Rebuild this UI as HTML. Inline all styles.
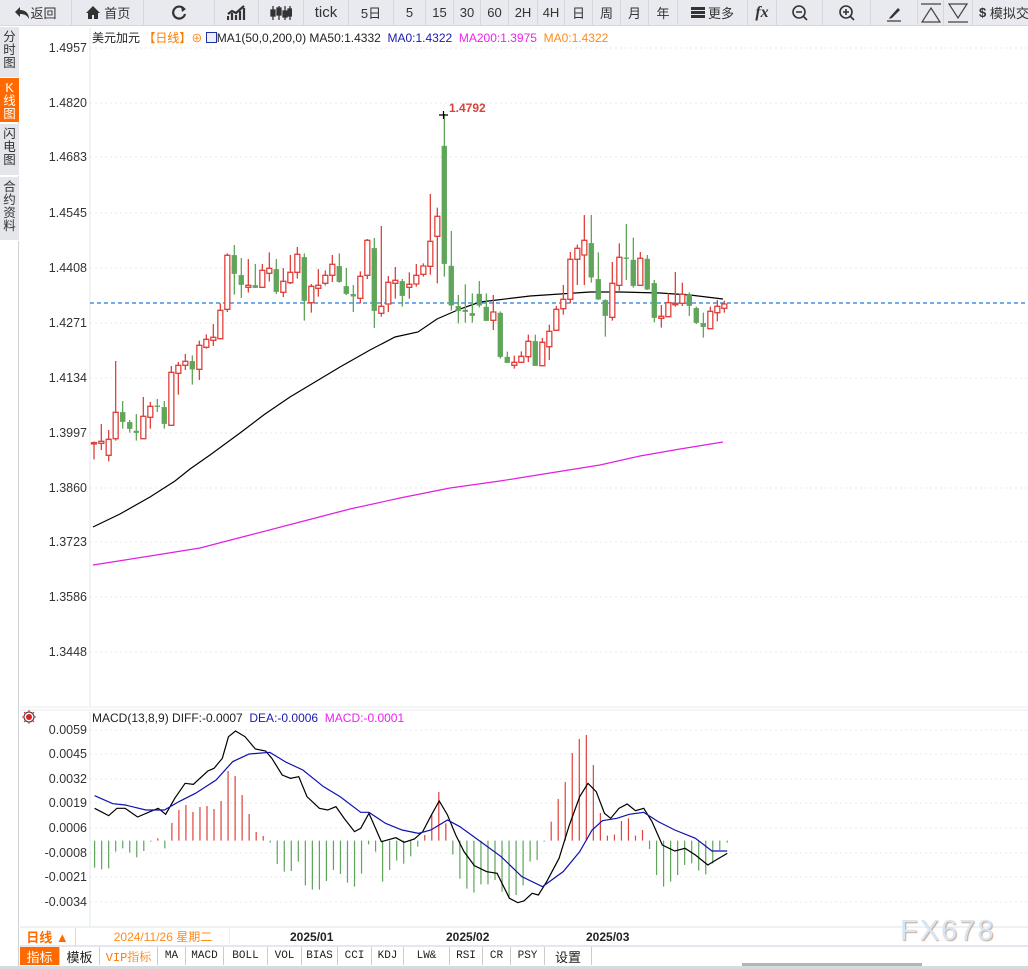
<!DOCTYPE html>
<html><head><meta charset="utf-8"><style>
*{margin:0;padding:0;box-sizing:border-box}
body{width:1028px;height:969px;background:#fff;position:relative;overflow:hidden;font-family:"Liberation Sans","Noto Sans CJK SC",sans-serif;font-size:12px;color:#222}
.tb{position:absolute;top:0;left:0;width:1028px;height:27px;background:#fff}
.b{position:absolute;top:0;height:26px;background:#e9eaef;border-right:1px solid #d6d7dd;border-bottom:1px solid #d6d7dd;display:flex;align-items:center;justify-content:center;font-size:13px;color:#333}
.side{position:absolute;left:0;top:27px;width:19px;height:940px;background:#fff;border-right:1px solid #d0d2d8}
.tab{position:absolute;left:0;width:19px;background:#e4e6ec;color:#333;font-size:12.5px;line-height:13px;text-align:center;padding-top:4px;border-bottom:1px solid #fff}
.lab{position:absolute;right:941px;font-size:12.5px;color:#333;text-align:right}
.t{position:absolute;white-space:nowrap}
.bt{position:absolute;top:947px;height:18px;border-right:1px solid #ccc;font-family:"Liberation Mono","Noto Serif CJK SC",monospace;font-size:11px;display:flex;align-items:center;justify-content:center;color:#222;background:#fff}
</style></head><body>
<div class="tb">
<div class="b" style="left:0;width:72px"><svg width="16" height="14" viewBox="0 0 16 14"><path d="M6 1L1 6L6 11V8C10 8 13 9 15 13C15 8 12 4 6 4Z" fill="#333"/></svg>返回</div>
<div class="b" style="left:72px;width:72px"><svg width="16" height="15" viewBox="0 0 16 15"><path d="M8 1L1 8H3V14H7V10H9V14H13V8H15Z" fill="#333"/></svg>&nbsp;首页</div>
<div class="b" style="left:144px;width:71px"><svg width="18" height="18" viewBox="0 0 18 18"><path d="M14 5A6 6 0 1 0 15 10" fill="none" stroke="#333" stroke-width="2.2"/><path d="M11 2L16 5L12 8Z" fill="#333"/></svg></div>
<div class="b" style="left:215px;width:44px"><svg width="20" height="16" viewBox="0 0 20 16"><path d="M1 15V11M5 15V8M9 15V10M13 15V6M17 15V3M1 9L5 6L9 8L17 1" stroke="#333" stroke-width="2.2" fill="none"/></svg></div>
<div class="b" style="left:259px;width:45px"><svg width="22" height="16" viewBox="0 0 22 16"><g fill="#333" stroke="#333" stroke-width="1.3"><path d="M3 1V15M9 1V15M15 1V15M20 1V15"/><rect x="1" y="5" width="4" height="6"/><rect x="7" y="3" width="4" height="7"/><rect x="13" y="6" width="4" height="6"/><rect x="18" y="4" width="4" height="7"/></g></svg></div>
<div class="b" style="left:304px;width:45px;font-size:15px">tick</div>
<div class="b" style="left:349px;width:45px">5日</div>
<div class="b" style="left:394px;width:32px">5</div>
<div class="b" style="left:426px;width:28px">15</div>
<div class="b" style="left:454px;width:27px">30</div>
<div class="b" style="left:481px;width:28px">60</div>
<div class="b" style="left:509px;width:29px">2H</div>
<div class="b" style="left:538px;width:27px">4H</div>
<div class="b" style="left:565px;width:28px">日</div>
<div class="b" style="left:593px;width:28px">周</div>
<div class="b" style="left:621px;width:28px">月</div>
<div class="b" style="left:649px;width:29px">年</div>
<div class="b" style="left:678px;width:70px"><span style="display:inline-block;width:14px;height:11px;border-top:3px solid #333;border-bottom:3px solid #333;position:relative;margin-right:3px"><span style="position:absolute;left:0;top:1px;width:14px;height:3px;background:#333"></span></span>更多</div>
<div class="b" style="left:748px;width:29px;font-family:'Liberation Serif',serif;font-style:italic;font-weight:bold;font-size:16px">fx</div>
<div class="b" style="left:777px;width:46px"><svg width="18" height="18" viewBox="0 0 18 18"><circle cx="8" cy="8" r="6" fill="none" stroke="#333" stroke-width="1.6"/><path d="M5 8H11M12.5 12.5L16 16" stroke="#333" stroke-width="1.6"/></svg></div>
<div class="b" style="left:823px;width:48px"><svg width="18" height="18" viewBox="0 0 18 18"><circle cx="8" cy="8" r="6" fill="none" stroke="#333" stroke-width="1.6"/><path d="M5 8H11M8 5V11M12.5 12.5L16 16" stroke="#333" stroke-width="1.6"/></svg></div>
<div class="b" style="left:871px;width:47px"><svg width="18" height="18" viewBox="0 0 18 18"><path d="M5 13L13 4L15 6L7 14L4 15Z" fill="#333"/><path d="M2 17H16" stroke="#333" stroke-width="1.2"/></svg></div>
<div class="b" style="left:918px;width:26px"><svg width="22" height="20" viewBox="0 0 22 20"><path d="M1 1H21M2 19H20L11 5Z" fill="none" stroke="#444" stroke-width="1.2"/></svg></div>
<div class="b" style="left:944px;width:29px"><svg width="22" height="20" viewBox="0 0 22 20"><path d="M1 19H21M2 1H20L11 15Z" fill="none" stroke="#444" stroke-width="1.2"/></svg></div>
<div class="b" style="left:973px;width:60px;justify-content:flex-start;padding-left:6px"><b>$</b>&nbsp;模拟交</div>
</div>
<div class="side">
<div class="tab" style="top:0;height:51px">分<br>时<br>图</div>
<div class="tab" style="top:51px;height:45px;background:#ff6a00;color:#fff">K<br>线<br>图</div>
<div class="tab" style="top:97px;height:52px">闪<br>电<br>图</div>
<div class="tab" style="top:150px;height:64px">合<br>约<br>资<br>料</div>
</div>
<svg style="position:absolute;left:0;top:0" width="1028" height="969">
<g stroke="#e4e8ee" stroke-dasharray="2,3">
<path d="M90 48H1028M90 103H1028M90 157H1028M90 213H1028M90 268H1028M90 323H1028M90 378H1028M90 433H1028M90 488H1028M90 542H1028M90 597H1028M90 652H1028"/>
<path d="M90 730H1028M90 754H1028M90 779H1028M90 803H1028M90 828H1028M90 853H1028M90 877H1028M90 902H1028"/>
</g>
<path d="M90 28V706M90 712V927" stroke="#dfe8ee" stroke-width="1"/>
<path d="M20 707H1028M20 710H1028" stroke="#e6eaee"/>
<path d="M20 927H1028" stroke="#dfe6ea"/>
<path d="M20 946H1028" stroke="#c9d2dc"/>
<path d="M90 303H1028" stroke="#1e7be0" stroke-dasharray="4,3" stroke-width="1.2"/>
<polyline fill="none" stroke="#000" stroke-width="1.2" points="93,527 120,514 150,497 175,481 190,469 210,455 240,433 265,414 290,397 315,382 340,367 370,350 395,337 418,332 437,319 460,309 480,302 497,300 530,296 560,294 590,292 620,292 660,293 690,295 723,299"/>
<polyline fill="none" stroke="#e020e0" stroke-width="1.2" points="93,565 150,556 200,548 250,535 300,522 350,509 400,498 450,488 500,481 550,473 600,465 640,456 680,449 723,442"/>
<g transform="translate(88,100) scale(0.33333)">
<g stroke="#e0413c" fill="#fff" stroke-width="1.3" vector-effect="non-scaling-stroke">
<path vector-effect="non-scaling-stroke" d="M18 1024V1078M40 972V1050M62 990V1084M83 783V1022M166 891V1016M187 906V986M250 798V976M271 786V884M292 762V810M334 722V840M355 703V746M376 672V738M397 610V718M418 460V636M481 477V578M523 492V562M544 457V545M586 504V591M607 465V552M628 441V536M670 552V638M691 507V590M712 511V556M733 465V546M817 514V610M838 417V537M880 378V650M901 528V636M922 501V596M964 517V596M985 492V560"/>
<rect vector-effect="non-scaling-stroke" x="10.5" y="1028" width="15" height="4"/><rect vector-effect="non-scaling-stroke" x="32.5" y="1024" width="15" height="6"/><rect vector-effect="non-scaling-stroke" x="54.5" y="1018" width="15" height="48"/><rect vector-effect="non-scaling-stroke" x="75.5" y="937" width="15" height="79"/><rect vector-effect="non-scaling-stroke" x="158.5" y="949" width="15" height="67"/><rect vector-effect="non-scaling-stroke" x="179.5" y="919" width="15" height="33"/><rect vector-effect="non-scaling-stroke" x="242.5" y="817" width="15" height="159"/><rect vector-effect="non-scaling-stroke" x="263.5" y="796" width="15" height="24"/><rect vector-effect="non-scaling-stroke" x="284.5" y="784" width="15" height="12"/><rect vector-effect="non-scaling-stroke" x="326.5" y="736" width="15" height="72"/><rect vector-effect="non-scaling-stroke" x="347.5" y="718" width="15" height="24"/><rect vector-effect="non-scaling-stroke" x="368.5" y="712" width="15" height="9"/><rect vector-effect="non-scaling-stroke" x="389.5" y="631" width="15" height="85"/><rect vector-effect="non-scaling-stroke" x="410.5" y="466" width="15" height="162"/><rect vector-effect="non-scaling-stroke" x="473.5" y="556" width="15" height="6"/><rect vector-effect="non-scaling-stroke" x="515.5" y="511" width="15" height="51"/><rect vector-effect="non-scaling-stroke" x="536.5" y="505" width="15" height="15"/><rect vector-effect="non-scaling-stroke" x="578.5" y="544" width="15" height="33"/><rect vector-effect="non-scaling-stroke" x="599.5" y="517" width="15" height="31"/><rect vector-effect="non-scaling-stroke" x="620.5" y="463" width="15" height="54"/><rect vector-effect="non-scaling-stroke" x="662.5" y="559" width="15" height="49"/><rect vector-effect="non-scaling-stroke" x="683.5" y="556" width="15" height="9"/><rect vector-effect="non-scaling-stroke" x="704.5" y="526" width="15" height="24"/><rect vector-effect="non-scaling-stroke" x="725.5" y="493" width="15" height="33"/><rect vector-effect="non-scaling-stroke" x="809.5" y="529" width="15" height="66"/><rect vector-effect="non-scaling-stroke" x="830.5" y="421" width="15" height="105"/><rect vector-effect="non-scaling-stroke" x="872.5" y="619" width="15" height="21"/><rect vector-effect="non-scaling-stroke" x="893.5" y="547" width="15" height="65"/><rect vector-effect="non-scaling-stroke" x="914.5" y="541" width="15" height="9"/><rect vector-effect="non-scaling-stroke" x="956.5" y="553" width="15" height="9"/><rect vector-effect="non-scaling-stroke" x="977.5" y="526" width="15" height="26"/>
</g>
<g stroke="#5fa55a" fill="#5fa55a">
<path vector-effect="non-scaling-stroke" stroke-width="1.3" d="M104 903V986M125 960V998M145 942V1022M208 897V936M229 903V986M313 766V854M439 435V584M460 474V594M502 492V564M565 477V582M649 460V662M754 460V548M775 504V585M796 555V636M859 414V684M943 537V620"/>
<rect x="96.5" y="937" width="15" height="28"/><rect x="117.5" y="967" width="15" height="19"/><rect x="137.5" y="993" width="15" height="5"/><rect x="200.5" y="917" width="15" height="3"/><rect x="221.5" y="922" width="15" height="49"/><rect x="305.5" y="784" width="15" height="24"/><rect x="431.5" y="466" width="15" height="55"/><rect x="452.5" y="526" width="15" height="28"/><rect x="494.5" y="556" width="15" height="7"/><rect x="557.5" y="508" width="15" height="67"/><rect x="641.5" y="472" width="15" height="130"/><rect x="746.5" y="499" width="15" height="46"/><rect x="767.5" y="559" width="15" height="22"/><rect x="788.5" y="583" width="15" height="6"/><rect x="851.5" y="445" width="15" height="187"/><rect x="935.5" y="544" width="15" height="43"/>
</g>
</g>
<g transform="translate(410,100) scale(0.33333)">
<g stroke="#e0413c" fill="#fff">
<path vector-effect="non-scaling-stroke" stroke-width="1.3" d="M40 490V530M61 282V524M82 323V550M250 585V690M313 767V806M334 754V787M355 704V786M397 714V797M418 674V780M439 618V692M460 555V644M481 456V610M502 434V555M523 345V555M607 486V662M628 430V572M691 456V556M754 615V683M775 580V650M796 516V620M817 548V618M901 620V686M922 600V664M943 602V638"/>
<g stroke-width="1.3">
<rect vector-effect="non-scaling-stroke" x="32.5" y="498" width="15" height="25"/><rect vector-effect="non-scaling-stroke" x="53.5" y="424" width="15" height="75"/><rect vector-effect="non-scaling-stroke" x="74.5" y="349" width="15" height="60"/><rect vector-effect="non-scaling-stroke" x="242.5" y="636" width="15" height="25"/><rect vector-effect="non-scaling-stroke" x="305.5" y="787" width="15" height="9"/><rect vector-effect="non-scaling-stroke" x="326.5" y="769" width="15" height="18"/><rect vector-effect="non-scaling-stroke" x="347.5" y="724" width="15" height="46"/><rect vector-effect="non-scaling-stroke" x="389.5" y="727" width="15" height="70"/><rect vector-effect="non-scaling-stroke" x="410.5" y="694" width="15" height="46"/><rect vector-effect="non-scaling-stroke" x="431.5" y="628" width="15" height="63"/><rect vector-effect="non-scaling-stroke" x="452.5" y="598" width="15" height="28"/><rect vector-effect="non-scaling-stroke" x="473.5" y="478" width="15" height="120"/><rect vector-effect="non-scaling-stroke" x="494.5" y="445" width="15" height="33"/><rect vector-effect="non-scaling-stroke" x="515.5" y="421" width="15" height="44"/><rect vector-effect="non-scaling-stroke" x="599.5" y="550" width="15" height="102"/><rect vector-effect="non-scaling-stroke" x="620.5" y="472" width="15" height="84"/><rect vector-effect="non-scaling-stroke" x="683.5" y="475" width="15" height="81"/><rect vector-effect="non-scaling-stroke" x="746.5" y="649" width="15" height="6"/><rect vector-effect="non-scaling-stroke" x="767.5" y="608" width="15" height="42"/><rect vector-effect="non-scaling-stroke" x="788.5" y="610" width="15" height="4"/><rect vector-effect="non-scaling-stroke" x="809.5" y="583" width="15" height="27"/><rect vector-effect="non-scaling-stroke" x="893.5" y="634" width="15" height="52"/><rect vector-effect="non-scaling-stroke" x="914.5" y="619" width="15" height="19"/><rect vector-effect="non-scaling-stroke" x="935.5" y="612" width="15" height="13"/>
</g></g>
<g stroke="#5fa55a" fill="#5fa55a">
<path vector-effect="non-scaling-stroke" stroke-width="1.3" d="M103 42V530M124 393V632M145 585V670M166 553V668M187 580V668M208 543V622M229 580V662M271 634V776M292 755V788M376 704V797M544 345V548M565 457V600M586 598V710M649 372V540M670 413V563M712 465V570M733 540V667M838 577V648M859 620V672M880 638V713"/>
<rect x="95.5" y="138" width="15" height="353"/><rect x="116.5" y="498" width="15" height="118"/><rect x="137.5" y="619" width="15" height="13"/><rect x="158.5" y="630" width="15" height="5"/><rect x="179.5" y="640" width="15" height="7"/><rect x="200.5" y="582" width="15" height="34"/><rect x="221.5" y="621" width="15" height="41"/><rect x="263.5" y="639" width="15" height="131"/><rect x="284.5" y="771" width="15" height="17"/><rect x="368.5" y="724" width="15" height="73"/><rect x="536.5" y="430" width="15" height="102"/><rect x="557.5" y="538" width="15" height="60"/><rect x="578.5" y="601" width="15" height="46"/><rect x="641.5" y="473" width="15" height="3"/><rect x="662.5" y="480" width="15" height="77"/><rect x="704.5" y="477" width="15" height="91"/><rect x="725.5" y="550" width="15" height="103"/><rect x="830.5" y="583" width="15" height="34"/><rect x="851.5" y="625" width="15" height="43"/><rect x="872.5" y="670" width="15" height="10"/>
</g>
</g>
<path d="M439 115H448M443.5 111V119" stroke="#000" stroke-width="1.2"/>
<text x="449" y="112" font-family="Liberation Sans" font-size="12" font-weight="bold" fill="#d9423a">1.4792</text>
<g transform="translate(88,725) scale(0.4132,0.33333)">
<path vector-effect="non-scaling-stroke" stroke="#e0413c" stroke-width="1.2" fill="none" d="M169 347V340M203 347V294M220 347V255M237 347V240M254 347V261M271 347V246M288 347V243M305 347V252M322 347V228M339 347V138M356 347V153M373 347V210M390 347V267M407 347V321M424 347V333M815 347V330M832 347V270M849 347V201M866 347V295M1121 347V290M1138 347V222M1155 347V171M1172 347V84M1189 347V42M1206 347V30M1223 347V120M1240 347V264M1257 347V332M1274 347V329M1291 347V288M1308 347V280M1325 347V332M1342 347V315"/>
<path vector-effect="non-scaling-stroke" stroke="#5fa55a" stroke-width="1.2" fill="none" d="M16 347V428M33 347V433M50 347V430M67 347V380M84 347V370M101 347V383M118 347V397M135 347V378M152 347V350M186 347V370M441 347V353M458 347V417M475 347V440M492 347V438M509 347V410M526 347V481M543 347V494M560 347V494M577 347V468M594 347V435M611 347V447M628 347V473M645 347V485M662 347V446M679 347V358M696 347V380M713 347V470M730 347V435M747 347V407M764 347V416M781 347V394M798 347V365M883 347V389M900 347V461M917 347V491M934 347V503M951 347V478M968 347V478M985 347V465M1002 347V500M1019 347V520M1036 347V510M1053 347V481M1070 347V410M1087 347V405M1104 347V350M1359 347V372M1376 347V450M1393 347V485M1410 347V470M1427 347V450M1444 347V420M1461 347V415M1478 347V437M1495 347V448M1512 347V415M1529 347V375M1547 347V353"/>
<polyline vector-effect="non-scaling-stroke" fill="none" stroke="#000" stroke-width="1.2" points="16,250 50,272 70,250 90,250 120,276 150,260 170,250 188,268 210,220 235,175 255,178 290,138 305,130 325,100 340,35 357,18 380,35 405,72 430,78 445,100 470,150 490,160 510,155 530,215 560,250 580,255 600,245 620,280 645,320 660,310 680,265 710,350 745,338 765,352 790,342 810,320 832,268 850,228 870,270 890,330 910,380 935,422 965,440 990,445 1020,520 1040,533 1055,528 1075,505 1090,510 1110,470 1140,400 1165,300 1190,215 1210,175 1230,200 1250,265 1265,280 1285,250 1305,237 1325,257 1345,250 1365,290 1390,360 1420,378 1445,370 1470,390 1500,420 1520,405 1547,385"/>
<polyline vector-effect="non-scaling-stroke" fill="none" stroke="#1010b0" stroke-width="1.2" points="16,212 60,236 90,240 140,255 185,255 220,230 260,205 310,165 350,110 390,87 440,82 480,112 520,135 570,185 610,215 660,262 680,262 720,295 760,315 800,325 830,315 870,285 900,305 950,350 1000,395 1050,455 1100,485 1150,440 1190,380 1220,315 1245,287 1280,280 1310,268 1345,262 1380,290 1420,315 1470,340 1510,378 1547,378"/>
</g>
<circle cx="29" cy="717" r="3" fill="#e02020"/><circle cx="29" cy="717" r="5" fill="none" stroke="#333" stroke-width="1"/>
<path d="M29 710V712M29 722V724M22 717H24M34 717H36M24 712L25.5 713.5M34 712L32.5 713.5M24 722L25.5 720.5M34 722L32.5 720.5" stroke="#e02020" stroke-width="1"/>
<rect x="742" y="963" width="180" height="6" fill="#b4b4bc"/>
</svg>
<div class="lab" style="top:41px">1.4957</div><div class="lab" style="top:96px">1.4820</div><div class="lab" style="top:150px">1.4683</div><div class="lab" style="top:206px">1.4545</div><div class="lab" style="top:261px">1.4408</div><div class="lab" style="top:316px">1.4271</div><div class="lab" style="top:371px">1.4134</div><div class="lab" style="top:426px">1.3997</div><div class="lab" style="top:481px">1.3860</div><div class="lab" style="top:535px">1.3723</div><div class="lab" style="top:590px">1.3586</div><div class="lab" style="top:645px">1.3448</div>
<div class="lab" style="top:723px">0.0059</div><div class="lab" style="top:747px">0.0045</div><div class="lab" style="top:772px">0.0032</div><div class="lab" style="top:796px">0.0019</div><div class="lab" style="top:821px">0.0006</div><div class="lab" style="top:846px">-0.0008</div><div class="lab" style="top:870px">-0.0021</div><div class="lab" style="top:895px">-0.0034</div>
<div class="t" style="left:92px;top:29px">美元加元 <span style="color:#ff7a00">【日线】</span><span style="color:#ff7a00;font-size:11px">⊕</span> <span style="display:inline-block;width:11px;height:11px;border:1px solid #2030a0;background:#eef;vertical-align:-1px"></span>MA1(50,0,200,0) MA50:1.4332 &nbsp;<span style="color:#1a1ab0">MA0:1.4322</span> &nbsp;<span style="color:#f020f0">MA200:1.3975</span> &nbsp;<span style="color:#ff8a1a">MA0:1.4322</span></div>
<div class="t" style="left:92px;top:711px">MACD(13,8,9) DIFF:-0.0007 &nbsp;<span style="color:#1a1ab0">DEA:-0.0006</span> &nbsp;<span style="color:#f020f0">MACD:-0.0001</span></div>
<div class="t" style="left:20px;top:928px;width:56px;height:18px;border-right:1px solid #ddd;color:#ff6a00;font-weight:bold;font-size:13px;text-align:center;line-height:20px">日线 ▲</div>
<div class="t" style="left:97px;top:928px;width:133px;height:18px;border-right:1px solid #eee;color:#ff8a1a;text-align:center;line-height:18px">2024/11/26 星期二</div>
<div class="t" style="left:290px;top:930px;font-weight:bold">2025/01</div>
<div class="t" style="left:446px;top:930px;font-weight:bold">2025/02</div>
<div class="t" style="left:586px;top:930px;font-weight:bold">2025/03</div>
<div class="t" style="left:900px;top:915px;font-size:29px;letter-spacing:2px;color:#d6e6f6;text-shadow:1px 1px 1px #c9a890">FX678</div>
<div class="bt" style="left:20px;width:40px;background:#ff6a00;color:#fff;font-family:'Liberation Sans','Noto Sans CJK SC',sans-serif;font-size:13px">指标</div>
<div class="bt" style="left:60px;width:40px;font-family:'Liberation Sans','Noto Sans CJK SC',sans-serif;font-size:13px">模板</div>
<div class="bt" style="left:100px;width:58px;color:#ff7a00;font-size:12px">VIP指标</div>
<div class="bt" style="left:158px;width:28px">MA</div>
<div class="bt" style="left:186px;width:38px">MACD</div>
<div class="bt" style="left:224px;width:44px">BOLL</div>
<div class="bt" style="left:268px;width:34px">VOL</div>
<div class="bt" style="left:302px;width:36px">BIAS</div>
<div class="bt" style="left:338px;width:34px">CCI</div>
<div class="bt" style="left:372px;width:32px">KDJ</div>
<div class="bt" style="left:404px;width:46px">LW&amp;</div>
<div class="bt" style="left:450px;width:33px">RSI</div>
<div class="bt" style="left:483px;width:28px">CR</div>
<div class="bt" style="left:511px;width:34px">PSY</div>
<div class="bt" style="left:545px;width:47px;font-family:'Liberation Sans','Noto Sans CJK SC',sans-serif;font-size:13px">设置</div>
<div style="position:absolute;left:0;top:966px;width:1028px;height:3px;background:#d8dae0"></div>
</body></html>
